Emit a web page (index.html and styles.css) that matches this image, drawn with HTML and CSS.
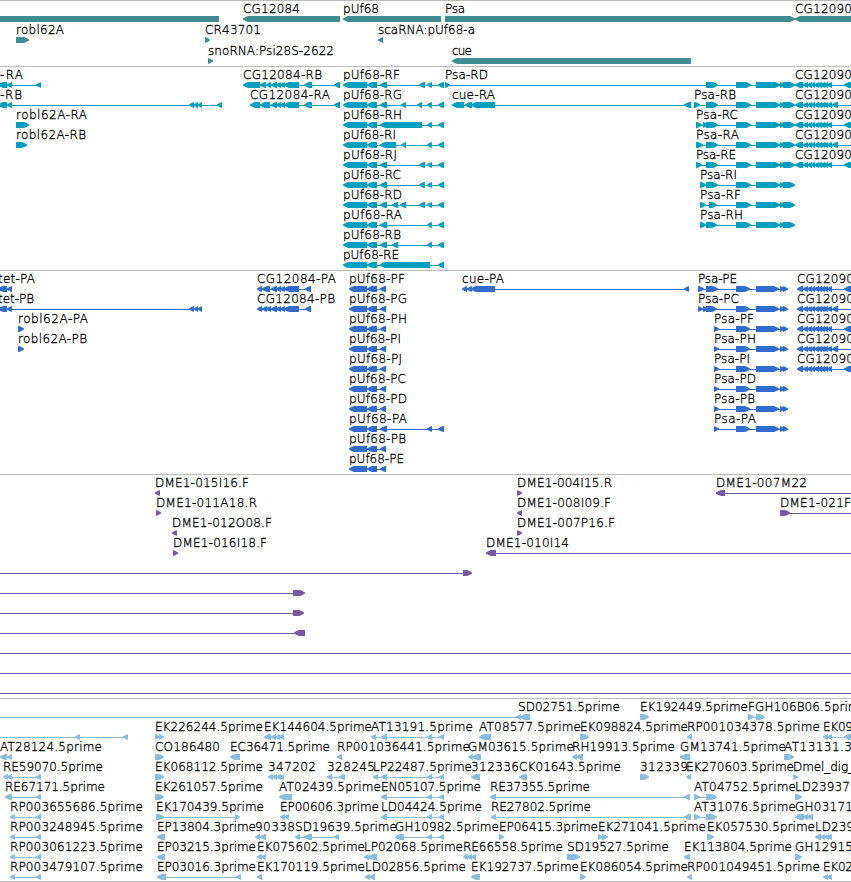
FILE: index.html
```
<!DOCTYPE html>
<html lang="en">
<head>
    <meta charset="UTF-8">
    <meta name="viewport" content="width=device-width, initial-scale=1.0">
    <title>Genome tracks</title>
    <link rel="stylesheet" href="styles.css">
</head>
<body>
    <div class="browser">
        <section class="track track-gene" id="gene"></section>
        <section class="track track-transcript" id="transcript"></section>
        <section class="track track-protein" id="protein"></section>
        <section class="track track-bac" id="bac"></section>
        <section class="track track-est" id="est"></section>
    </div>
    <script src="tracks.js"></script>
</body>
</html>
```

FILE: styles.css
```
body {
    margin: 0;
    background-color: #ffffff;
    font-family: 'DejaVu Sans', sans-serif;
    overflow: hidden;
}

.browser {
    display: flex;
    flex-direction: column;
    width: 851px;
    height: 881px;
    overflow: hidden;
    border-bottom: 1px solid #bbbbbb;
}

.track {
    display: flex;
    flex-direction: column;
    border-top: 1px solid #bbbbbb;
    padding-bottom: 3px;
}

.row {
    display: block;
    width: 851px;
    height: 20px;
    overflow: visible;
}

.track-gene {
    color: #408e94;
    padding-bottom: 2px;
}

/* Genes are spaced a little wider than the other tracks */
.track-gene .row {
    height: 21px;
}

.track-transcript {
    color: #009ebf;
}

.track-protein {
    color: #316bcd;
}

.track-bac {
    color: #7558a6;
}

.track-est {
    color: #8abddd;
    padding-bottom: 2px;
}

.block {
    fill: currentColor;
}

.connector {
    fill: currentColor;
    shape-rendering: crispEdges;
}

.label {
    fill: #000000;
    stroke: #000000;
    stroke-width: 0.3px;
    font-size: 12px;
    font-weight: 200;
}
```

FILE: tracks.js
```
const SVG_NS = 'http://www.w3.org/2000/svg';
const OFF = 860; // just past the right edge of the view

// Advance widths of the label characters
const WIDTHS = {
    A: 9, B: 8, C: 8, D: 9, E: 6, F: 7, G: 9, H: 9, I: 3, J: 4, K: 8, L: 6, M: 11,
    N: 8, O: 9, P: 7, R: 8, S: 7, T: 7, U: 8, a: 7, b: 8, c: 6, d: 8, e: 7, f: 4,
    g: 8, i: 3, l: 3, m: 11, n: 7, o: 7, p: 8, r: 5, s: 6, t: 4, u: 7,
    '-': 6, '.': 4, ':': 4, '_': 6
};

// Exons shared by several transcripts
const tetEnd = [[-2, 7], [7, 12]];
const tetMid = [[189, 194], [194, 198], [198, 202]];
const cg12084 = [[271, 277], [276, 281], [280, 285], [284, 299]];
const pufA = [[343, 367], [367, 377]];
const pufC = [380, 387];
const pufD = [419, 425];
const pufE = [427, 432];
const pufF = [438, 444];
const pufP = [[349, 367], [367, 377], [380, 386]];
const psaEnd = [[736, 751], [756, 780], [780, 785], [783, 795]];
const psaPEnd = [[736, 750], [756, 779], [780, 785], [783, 788]];
const cgExons = [[803, 808], [807, 812], [811, 815], [814, 819], [817, 822], [820, 825], [823, 828], [827, 832]];
const cgOdd = [[795, 803], ...cgExons, [844, OFF]];
const cgEven = [[795, 803], ...cgExons, [832, 838], [855, OFF]];
const cgPOdd = [[797, 803], ...cgExons, [844, OFF]];
const cgPEven = [[797, 803], ...cgExons, [832, 838], [855, OFF]];
const estEnd = [[427, 432], [439, 444]];

// Each row is a list of [label, start, strand, blocks, lineStart, lineEnd]
const tracks = {
    gene: [
        [
            ['', -20, '-', [[-20, 219]]],
            ['CG12084', 243, '-', [[243, 340]]],
            ['pUf68', 343, '-', [[343, 441]]],
            ['Psa', 445, '+', [[445, 795]]],
            ['CG12090', 795, '-', [[795, OFF]]]
        ],
        [
            ['robl62A', 16, '+', [[16, 29]]],
            ['CR43701', 205, '+', [[205, 210]]],
            ['scaRNA:pUf68-a', 378, '-', [[378, 383]]]
        ],
        [
            ['snoRNA:Psi28S-2622', 208, '+', [[208, 213]]],
            ['cue', 452, '-', [[452, 691]]]
        ]
    ],
    transcript: [
        [
            ['-RA', 0, '-', [...tetEnd, [36, 41]]],
            ['CG12084-RB', 243, '-', [[243, 260], [260, 266], [266, 271], ...cg12084, [304, 312], [334, 340]]],
            ['pUf68-RF', 343, '-', [...pufA, pufC, pufD, pufE, pufF]],
            ['Psa-RD', 445, '+', [[445, 450], [706, 718], ...psaEnd]],
            ['CG12090', 795, '-', cgOdd]
        ],
        [
            ['-RB', 0, '-', [...tetEnd, ...tetMid, [217, 222]]],
            ['CG12084-RA', 250, '-', [[250, 260], [260, 270], ...cg12084, [304, 312], [334, 340]]],
            ['pUf68-RG', 343, '-', [...pufA, pufC, [401, 406], [417, 422], pufE, pufF]],
            ['cue-RA', 452, '-', [[452, 464], [465, 472], [471, 495], [684, 691]]],
            ['Psa-RB', 694, '+', [[694, 700], [706, 718], ...psaEnd]],
            ['CG12090', 795, '-', cgEven]
        ],
        [
            ['robl62A-RA', 16, '+', [[16, 29]]],
            ['pUf68-RH', 343, '-', [...pufA, [380, 422], pufE, pufF]],
            ['Psa-RC', 696, '+', [[696, 702], [703, 708], [706, 718], ...psaEnd]],
            ['CG12090', 795, '-', cgOdd]
        ],
        [
            ['robl62A-RB', 16, '+', [[16, 27]]],
            ['pUf68-RI', 343, '-', [...pufA, [380, 396], [401, 406], pufE, pufF]],
            ['Psa-RA', 696, '+', [[696, 703], [706, 718], ...psaEnd]],
            ['CG12090', 795, '-', cgEven]
        ],
        [
            ['pUf68-RJ', 343, '-', [...pufA, pufC, pufD, pufE, pufF]],
            ['Psa-RE', 696, '+', [[696, 702], [706, 718], ...psaEnd]],
            ['CG12090', 795, '-', cgOdd]
        ],
        [
            ['pUf68-RC', 343, '-', [...pufA, pufC, pufD, pufE, pufF]],
            ['Psa-RI', 700, '+', [[700, 706], [706, 718], ...psaEnd]]
        ],
        [
            ['pUf68-RD', 343, '-', [...pufA, pufC, [392, 398], [400, 406], pufD, pufE, pufF]],
            ['Psa-RF', 700, '+', [[700, 706], [709, 717], ...psaEnd]]
        ],
        [
            ['pUf68-RA', 343, '-', [...pufA, pufC, pufE, pufF]],
            ['Psa-RH', 700, '+', [[700, 706], [706, 717], ...psaEnd]]
        ],
        [
            ['pUf68-RB', 343, '-', [...pufA, pufC, [392, 398], pufE, pufF]]
        ],
        [
            ['pUf68-RE', 343, '-', [...pufA, [380, 430], pufF]]
        ]
    ],
    protein: [
        [
            ['tet-PA', -2, '-', tetEnd],
            ['CG12084-PA', 257, '-', [[257, 262], [262, 270], ...cg12084, [305, 311]]],
            ['pUf68-PF', 349, '-', pufP],
            ['cue-PA', 462, '-', [[462, 467], [467, 472], [471, 495], [684, 689]]],
            ['Psa-PE', 698, '+', [[698, 704], [706, 718], ...psaPEnd]],
            ['CG12090', 797, '-', cgPOdd]
        ],
        [
            ['tet-PB', -2, '-', [...tetEnd, ...tetMid]],
            ['CG12084-PB', 257, '-', [[257, 262], [262, 267], [266, 271], ...cg12084, [305, 311]]],
            ['pUf68-PG', 349, '-', pufP],
            ['Psa-PC', 698, '+', [[698, 703], [703, 708], [706, 717], ...psaPEnd]],
            ['CG12090', 797, '-', cgPEven]
        ],
        [
            ['robl62A-PA', 18, '+', [[18, 24]]],
            ['pUf68-PH', 349, '-', pufP],
            ['Psa-PF', 714, '+', [[714, 719], ...psaPEnd]],
            ['CG12090', 797, '-', cgPOdd]
        ],
        [
            ['robl62A-PB', 18, '+', [[18, 24]]],
            ['pUf68-PI', 349, '-', pufP],
            ['Psa-PH', 714, '+', [[714, 719], ...psaPEnd]],
            ['CG12090', 797, '-', cgPEven]
        ],
        [
            ['pUf68-PJ', 349, '-', pufP],
            ['Psa-PI', 714, '+', [[714, 719], ...psaPEnd]],
            ['CG12090', 797, '-', cgPOdd]
        ],
        [
            ['pUf68-PC', 349, '-', pufP],
            ['Psa-PD', 714, '+', [[714, 719], ...psaPEnd]]
        ],
        [
            ['pUf68-PD', 349, '-', pufP],
            ['Psa-PB', 714, '+', [[714, 719], ...psaPEnd]]
        ],
        [
            ['pUf68-PA', 349, '-', [[349, 367], [367, 377], pufC, pufE, pufF]],
            ['Psa-PA', 714, '+', [[714, 719], ...psaPEnd]]
        ],
        [
            ['pUf68-PB', 349, '-', pufP]
        ],
        [
            ['pUf68-PE', 349, '-', pufP]
        ]
    ],
    bac: [
        [
            ['DME1-015I16.F', 155, '-', [[155, 160]]],
            ['DME1-004I15.R', 517, '+', [[517, 522]]],
            ['DME1-007M22', 716, '-', [[716, 725]], 716, OFF]
        ],
        [
            ['DME1-011A18.R', 156, '+', [[156, 161]]],
            ['DME1-008I09.F', 517, '-', [[517, 522]]],
            ['DME1-021F', 780, '+', [[780, 790]], 780, OFF]
        ],
        [
            ['DME1-012O08.F', 172, '-', [[172, 177]]],
            ['DME1-007P16.F', 517, '+', [[517, 522]]]
        ],
        [
            ['DME1-016I18.F', 173, '+', [[173, 178]]],
            ['DME1-010I14', 486, '-', [[486, 496]], 486, OFF]
        ],
        [['', 0, '+', [[463, 472]], 0, 465]],
        [['', 0, '+', [[293, 305]], 0, 295]],
        [['', 0, '+', [[293, 304]], 0, 295]],
        [['', 0, '-', [[294, 305]], 0, 300]],
        [['', 0, '+', [], 0, OFF]],
        [['', 0, '+', [], 0, OFF]],
        [['', 0, '+', [], 0, OFF]]
    ],
    est: [
        [
            ['', 0, '-', [], 0, 518],
            ['SD02751.5prime', 518, '-', [[516, 521], [520, 530]]],
            ['EK192449.5prime', 640, '+', [[640, 649]]],
            ['FGH106B06.5prime', 748, '+', [[748, 754], [756, 765]]]
        ],
        [
            ['', 0, '-', [[75, 80], [123, 128]], 0, 125],
            ['EK226244.5prime', 155, '+', [[155, 160], [159, 164]]],
            ['EK144604.5prime', 264, '-', [[264, 271], [271, 276], [275, 280], [279, 284]]],
            ['AT13191.5prime', 371, '-', [[371, 376], [381, 387], ...estEnd]],
            ['AT08577.5prime', 479, '-', [[479, 491]]],
            ['EK098824.5prime', 580, '+', [[580, 589]]],
            ['RP001034378.5prime', 687, '-', [[687, 692]]],
            ['EK09', 823, '-', [[823, 828], [827, 832], [844, OFF]]]
        ],
        [
            ['AT28124.5prime', 0, '-', [[0, 7], [7, 12]]],
            ['CO186480', 155, '+', [[155, 164]]],
            ['EC36471.5prime', 230, '-', [[230, 240]]],
            ['RP001036441.5prime', 337, '-', [[337, 342]]],
            ['GM03615.5prime', 468, '-', [[468, 473], [472, 481]]],
            ['RH19913.5prime', 572, '-', [[572, 577], [576, 583]]],
            ['GM13741.5prime', 680, '-', [[680, 690]]],
            ['AT13131.3', 784, '+', [[784, 794]]]
        ],
        [
            ['RE59070.5prime', 3, '-', [[3, 8], [7, 12], [36, 41]]],
            ['EK068112.5prime', 155, '+', [[155, 164]]],
            ['347202', 268, '-', [[268, 273], [272, 277], [276, 281], [279, 284]]],
            ['328245', 327, '-', [[327, 332], [339, 345]]],
            ['LP22487.5prime', 373, '-', [[373, 378], [381, 387], ...estEnd]],
            ['312336', 471, '-', [[471, 480]]],
            ['CK01643.5prime', 519, '-', [[519, 527]]],
            ['312339', 640, '+', [[640, 649]]],
            ['EK270603.5prime', 686, '-', [[686, 691]]],
            ['Dmel_dig_', 793, '+', [[793, 798]]]
        ],
        [
            ['RE67171.5prime', 5, '-', [[5, 12], [36, 41]]],
            ['EK261057.5prime', 155, '+', [[155, 164]]],
            ['AT02439.5prime', 279, '-', [[279, 292]]],
            ['EN05107.5prime', 381, '-', [[381, 387], ...estEnd]],
            ['RE37355.5prime', 490, '-', [[490, 496], [684, 690]]],
            ['AT04752.5prime', 694, '+', [[694, 700], [706, 717]]],
            ['LD23937', 795, '+', [[795, 802]]]
        ],
        [
            ['RP003655686.5prime', 10, '-', [[10, 15], [36, 41]]],
            ['EK170439.5prime', 156, '+', [[156, 164], [235, 240]]],
            ['EP00606.3prime', 280, '-', [[280, 285], [284, 289]]],
            ['LD04424.5prime', 381, '-', [[381, 387], ...estEnd]],
            ['RE27802.5prime', 491, '-', [[491, 496], [684, 691]]],
            ['AT31076.5prime', 694, '+', [[694, 700], [706, 717]]],
            ['GH03171', 795, '-', [[795, 804], [803, 808], [807, 813]]]
        ],
        [
            ['RP003248945.5prime', 10, '-', [[10, 15], [36, 41]]],
            ['EP13804.3prime', 157, '-', [[157, 165]]],
            ['90338', 255, '-', [[255, 260], [260, 266]]],
            ['SD19639.5prime', 295, '-', [[295, 300], [304, 312], [334, 339]]],
            ['GH10982.5prime', 395, '-', [[395, 404], ...estEnd]],
            ['EP06415.3prime', 499, '+', [[499, 504]]],
            ['EK271041.5prime', 598, '+', [[598, 603], [602, 608]]],
            ['EK057530.5prime', 707, '+', [[707, 714]]],
            ['LD239', 815, '-', [[815, 821], [820, 825], [824, 829], [827, 832]]]
        ],
        [
            ['RP003061223.5prime', 10, '-', [[10, 15], [36, 41]]],
            ['EP03215.3prime', 157, '-', [[157, 165]]],
            ['EK075602.5prime', 257, '-', [[257, 262], [261, 266]]],
            ['LP02068.5prime', 364, '-', [[364, 369], [368, 377]]],
            ['RE66558.5prime', 463, '-', [[463, 468], [467, 472], [471, 476]]],
            ['SD19527.5prime', 567, '+', [[567, 580]]],
            ['EK113804.5prime', 684, '-', [[684, 690]]],
            ['GH12915', 795, '+', [[795, 802]]]
        ],
        [
            ['RP003479107.5prime', 10, '-', [[10, 15], [36, 41]]],
            ['EP03016.3prime', 157, '-', [[157, 166], [236, 241]]],
            ['EK170119.5prime', 257, '-', [[257, 262]]],
            ['LD02856.5prime', 365, '-', [[365, 370], [369, 375]]],
            ['EK192737.5prime', 471, '-', [[471, 480]]],
            ['EK086054.5prime', 580, '+', [[580, 586]]],
            ['RP001049451.5prime', 687, '-', [[687, 692]]],
            ['EK02', 823, '-', [[823, 828], [827, 832]]]
        ]
    ]
};

function createSvg(name, attrs) {
    const el = document.createElementNS(SVG_NS, name);
    for (const key in attrs) {
        el.setAttribute(key, attrs[key]);
    }
    return el;
}

function labelWidth(text) {
    return [...text].reduce((sum, ch) => sum + (WIDTHS[ch] || 8), 0);
}

// A 6px high bar whose leading end is pointed
function blockPoints(start, end, strand) {
    const head = Math.min(5, end - start);
    const tip = strand === '+' ? end : start;
    const tail = strand === '+' ? start : end;
    const dir = strand === '+' ? -1 : 1;
    const neck = tip + dir * head;
    const mid = tip + dir * head * 0.5;
    return `${tail},15 ${neck},15 ${mid},15.9 ${tip},17.5 ${tip},18.5 ${mid},20.1 ${neck},21 ${tail},21`;
}

function drawFeature(svg, [label, start, strand, blocks, lineStart, lineEnd]) {
    if (lineStart === undefined) {
        lineStart = blocks[0][0] + 2;
        lineEnd = blocks[blocks.length - 1][1] - 2;
    }
    if (blocks.length !== 1 || lineEnd === OFF || lineStart === 0) {
        svg.appendChild(createSvg('rect', { class: 'connector', x: lineStart, y: 18, width: lineEnd - lineStart, height: 1 }));
    }
    blocks.forEach(([from, to]) => {
        svg.appendChild(createSvg('polygon', { class: 'block', points: blockPoints(from, to, strand) }));
    });
    if (label) {
        const text = createSvg('text', { class: 'label', x: start, y: 12, textLength: labelWidth(label) });
        text.textContent = label;
        svg.appendChild(text);
    }
}

for (const id in tracks) {
    const section = document.getElementById(id);
    tracks[id].forEach(features => {
        const svg = createSvg('svg', { class: 'row' });
        features.forEach(feature => drawFeature(svg, feature));
        section.appendChild(svg);
    });
}
```
